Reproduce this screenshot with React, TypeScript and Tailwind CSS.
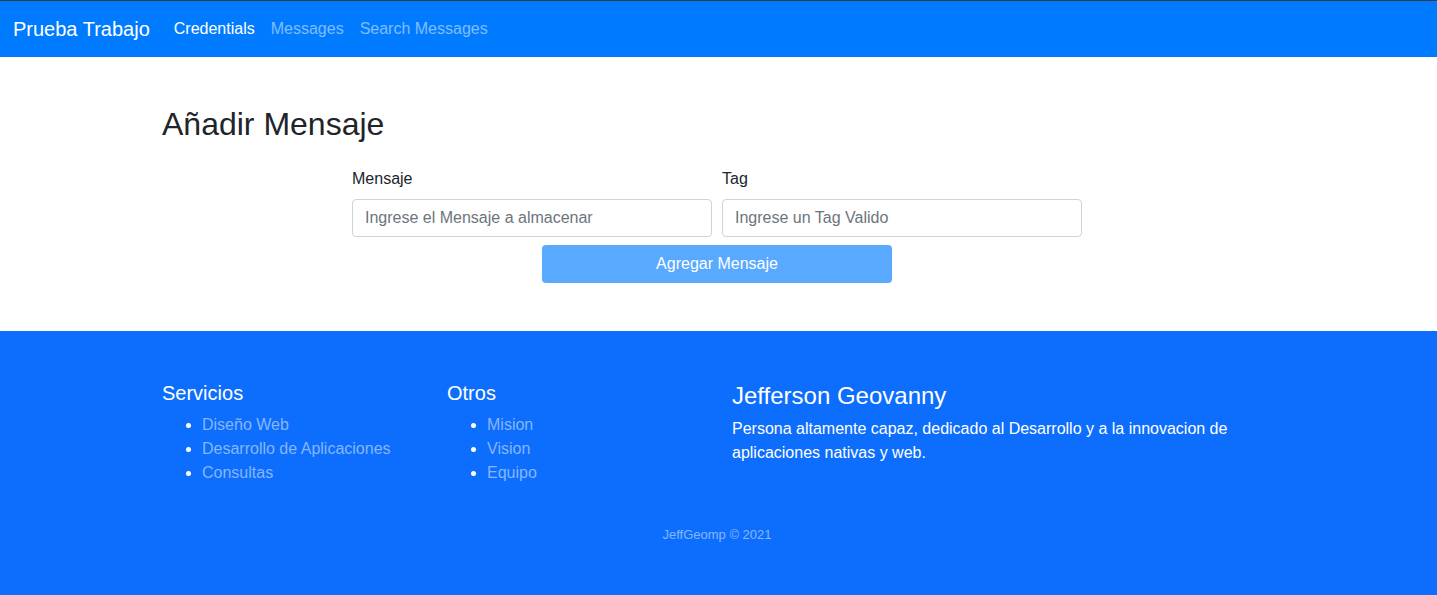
import React from 'react';

const font = { fontFamily: '"Liberation Sans", Arial, sans-serif' };

function Navbar() {
    return (
        <nav className="flex h-[57px] items-center border-t border-[#343a40] bg-[#007bff] px-[13px]">
            <span className="mr-4 text-[20px] leading-[30px] text-white">Prueba Trabajo</span>
            <ul className="flex">
                <li className="px-2 text-base text-white">Credentials</li>
                <li className="px-2 text-base text-white/50">Messages</li>
                <li className="px-2 text-base text-white/50">Search Messages</li>
            </ul>
        </nav>
    );
}

function MessageForm() {
    return (
        <section className="bg-white pt-12 pb-12 pr-[3px]">
            <div className="mx-auto w-[1140px] px-[15px]">
                <h2 className="mb-2 text-[32px] leading-[38px] text-[#212529]">Añadir Mensaje</h2>
                <div className="mt-[24px] flex flex-col items-center">
                    <div className="flex gap-[10px]">
                        <div className="w-[360px]">
                            <label className="mb-2 block text-base leading-6 text-[#212529]">Mensaje</label>
                            <input
                                className="h-[38px] w-full rounded border border-[#ced4da] px-3 text-base text-[#495057] placeholder:text-[#6c757d] outline-none"
                                placeholder="Ingrese el Mensaje a almacenar"
                            />
                        </div>
                        <div className="w-[360px]">
                            <label className="mb-2 block text-base leading-6 text-[#212529]">Tag</label>
                            <input
                                className="h-[38px] w-full rounded border border-[#ced4da] px-3 text-base text-[#495057] placeholder:text-[#6c757d] outline-none"
                                placeholder="Ingrese un Tag Valido"
                            />
                        </div>
                    </div>
                    <button className="mt-2 h-[38px] w-[350px] rounded bg-[#59a9ff] text-base text-white">
                        Agregar Mensaje
                    </button>
                </div>
            </div>
        </section>
    );
}

function Footer() {
    return (
        <footer className="bg-[#0d6efd] pt-[50px] pb-[50px] pr-[3px] text-white">
            <div className="mx-auto flex w-[1140px]">
                <div className="w-[285px] px-[15px]">
                    <h5 className="mb-2 text-[20px] leading-6">Servicios</h5>
                    <ul className="list-disc pl-10 text-base leading-6 marker:text-white">
                        <li className="text-[#86b6fe]">Diseño Web</li>
                        <li className="text-[#86b6fe]">Desarrollo de Aplicaciones</li>
                        <li className="text-[#86b6fe]">Consultas</li>
                    </ul>
                </div>
                <div className="w-[285px] px-[15px]">
                    <h5 className="mb-2 text-[20px] leading-6">Otros</h5>
                    <ul className="list-disc pl-10 text-base leading-6 marker:text-white">
                        <li className="text-[#86b6fe]">Mision</li>
                        <li className="text-[#86b6fe]">Vision</li>
                        <li className="text-[#86b6fe]">Equipo</li>
                    </ul>
                </div>
                <div className="w-[570px] px-[15px]">
                    <h4 className="mb-[7px] text-[24px] leading-[29px]">Jefferson Geovanny</h4>
                    <p className="text-base leading-6">
                        Persona altamente capaz, dedicado al Desarrollo y a la innovacion de aplicaciones nativas y web.
                    </p>
                </div>
            </div>
            <p className="mt-[42px] text-center text-[13px] leading-4 text-white/50">JeffGeomp © 2021</p>
        </footer>
    );
}

export default function App() {
    return (
        <div style={font} className="min-h-[595px] bg-[#0d6efd]">
            <Navbar />
            <MessageForm />
            <Footer />
        </div>
    );
}
